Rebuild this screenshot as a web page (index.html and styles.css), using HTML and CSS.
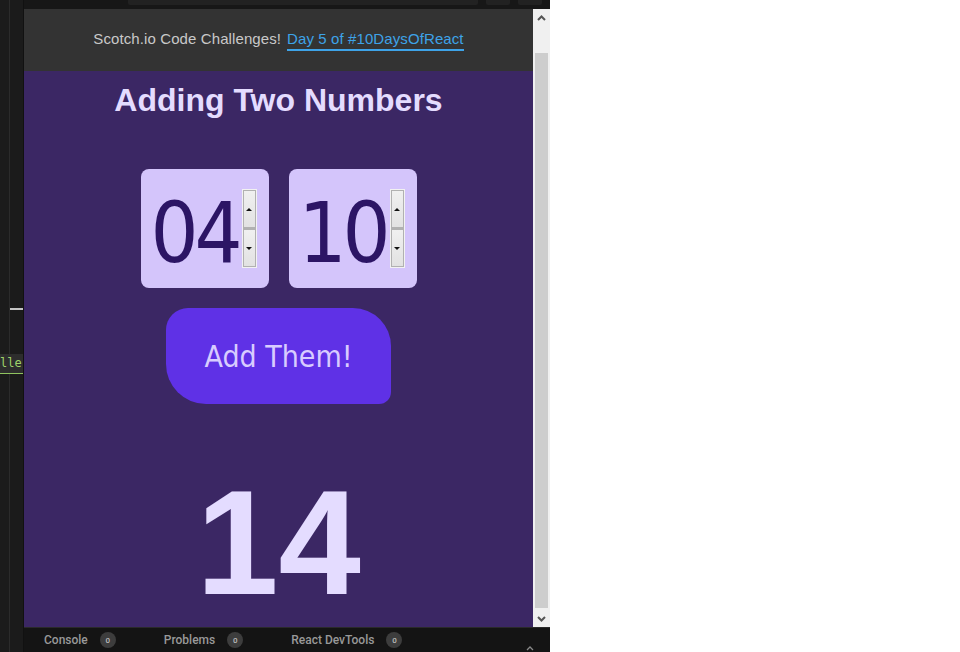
FILE: index.html
```html
<!DOCTYPE html>
<html>
<head>
<meta charset="utf-8">
<link rel="stylesheet" href="styles.css">
</head>
<body>
<div class="app">
  <div class="gutter">
    <div class="gutter-mark"></div>
    <div class="gutter-code">lle</div>
  </div>
  <div class="main">
    <div class="topbar">
      <div class="url-box"></div>
      <div class="top-btn"></div>
      <div class="top-btn"></div>
    </div>
    <div class="viewport">
      <div class="page">
        <div class="banner">
          <span>Scotch.io Code Challenges!</span>
          <a class="banner-link">Day 5 of #10DaysOfReact</a>
        </div>
        <div class="content">
          <h1 class="title">Adding Two Numbers</h1>
          <div class="inputs">
            <div class="num-box">
              <span class="num-value">04</span>
              <div class="spinner">
                <div class="spin-btn"><i class="tri-up"></i></div>
                <div class="spin-btn"><i class="tri-down"></i></div>
              </div>
            </div>
            <div class="num-box">
              <span class="num-value">10</span>
              <div class="spinner">
                <div class="spin-btn"><i class="tri-up"></i></div>
                <div class="spin-btn"><i class="tri-down"></i></div>
              </div>
            </div>
          </div>
          <button class="add-btn">Add Them!</button>
          <div class="result">14</div>
        </div>
      </div>
      <div class="scrollbar">
        <div class="sb-arrow">
          <svg width="9" height="6" viewBox="0 0 9 6"><path d="M1 5 L4.5 1.5 L8 5" fill="none" stroke="#555" stroke-width="2"/></svg>
        </div>
        <div class="sb-track"><div class="sb-thumb"></div></div>
        <div class="sb-arrow">
          <svg width="9" height="6" viewBox="0 0 9 6"><path d="M1 1 L4.5 4.5 L8 1" fill="none" stroke="#555" stroke-width="2"/></svg>
        </div>
      </div>
    </div>
    <div class="bottombar">
      <div class="tab"><span>Console</span><span class="badge">0</span></div>
      <div class="tab"><span>Problems</span><span class="badge">0</span></div>
      <div class="tab"><span>React DevTools</span><span class="badge">0</span></div>
      <div class="bb-chevron">
        <svg width="8" height="5" viewBox="0 0 8 5"><path d="M1 4 L4 1 L7 4" fill="none" stroke="#888" stroke-width="1.3"/></svg>
      </div>
    </div>
  </div>
</div>
</body>
</html>
```
FILE: styles.css
```css
* { box-sizing: border-box; }
html, body { margin: 0; padding: 0; background: #ffffff; }
.app {
  display: flex;
  width: 550px;
  height: 652px;
  font-family: "Liberation Sans", Arial, sans-serif;
}
.gutter {
  width: 24px;
  flex: none;
  display: flex;
  flex-direction: column;
  background: linear-gradient(to right, #1b1b1b 0, #1b1b1b 9px, #2b2b2b 9px, #2b2b2b 10px, #1b1b1b 10px, #1b1b1b 23px, #111 23px);
}
.gutter-mark {
  margin-top: 308px;
  margin-left: 10px;
  width: 13px;
  height: 2px;
  background: #c4c4c4;
}
.gutter-code {
  margin-top: 44px;
  width: 23px;
  height: 20px;
  background: #2d2d2d;
  overflow: hidden;
  white-space: nowrap;
  font-family: "DejaVu Sans Mono", monospace;
  font-size: 12px;
  line-height: 19px;
  color: #9fd36a;
  border-bottom: 1px solid #8fc35f;
}
.main {
  width: 526px;
  flex: none;
  display: flex;
  flex-direction: column;
}
.topbar {
  height: 9px;
  flex: none;
  background: #171717;
  display: flex;
  align-items: flex-start;
  padding-left: 104px;
}
.url-box {
  width: 350px;
  height: 5px;
  background: #222;
  border-radius: 0 0 2px 2px;
}
.top-btn {
  width: 24px;
  height: 5px;
  background: #222;
  margin-left: 8px;
  border-radius: 0 0 2px 2px;
}
.viewport {
  flex: 1;
  display: flex;
  min-height: 0;
}
.page {
  flex: 1;
  display: flex;
  flex-direction: column;
  min-height: 0;
}
.banner {
  height: 62px;
  flex: none;
  background: #333333;
  display: flex;
  justify-content: center;
  align-items: center;
  gap: 6px;
  font-size: 15px;
  letter-spacing: 0.1px;
  color: #c9c9c9;
  padding-bottom: 4px;
}
.banner-link {
  color: #3ea3e8;
  border-bottom: 2px solid #3ea3e8;
  padding-bottom: 2px;
  margin-top: 4px;
}
.content {
  flex: 1;
  min-height: 0;
  background: #3b2764;
  display: flex;
  flex-direction: column;
  align-items: center;
  padding-top: 11px;
}
.title {
  margin: 0;
  font-size: 32px;
  line-height: 37px;
  font-weight: bold;
  color: #e4dcff;
}
.inputs {
  margin-top: 50px;
  display: flex;
  gap: 20px;
}
.num-box {
  width: 128px;
  height: 119px;
  border-radius: 8px;
  background: #d4c5fb;
  display: flex;
  align-items: flex-start;
  padding: 20px 12px 20px 10px;
}
.num-value {
  flex: 1;
  font-family: "DejaVu Sans Condensed", "DejaVu Sans", sans-serif;
  font-size: 84px;
  line-height: 88px;
  letter-spacing: -4px;
  color: #2c1565;
  white-space: nowrap;
}
.spinner {
  width: 15px;
  height: 79px;
  flex: none;
  display: flex;
  flex-direction: column;
  border: 1px solid #f2f2f2;
  background: #f2f2f2;
}
.spin-btn {
  flex: 1;
  border: 1px solid #b1b1b1;
  background: linear-gradient(#f0f0f0, #e2e2e2);
  display: flex;
  align-items: center;
  justify-content: center;
}
.spin-btn + .spin-btn { border-top-width: 2px; }
.tri-up {
  width: 0; height: 0;
  border-left: 3px solid transparent;
  border-right: 3px solid transparent;
  border-bottom: 3px solid #111;
}
.tri-down {
  width: 0; height: 0;
  border-left: 3px solid transparent;
  border-right: 3px solid transparent;
  border-top: 3px solid #111;
}
.add-btn {
  margin-top: 20px;
  width: 225px;
  height: 96px;
  flex: none;
  border: none;
  background: #5f31e6;
  border-radius: 22px 38px 12px 40px;
  color: #d8ccff;
  font-family: "DejaVu Sans Condensed", "DejaVu Sans", sans-serif;
  font-size: 30px;
  padding: 0;
}
.result {
  margin-top: 64px;
  font-size: 148px;
  line-height: 150px;
  font-weight: bold;
  color: #e4dcff;
}
.scrollbar {
  width: 17px;
  flex: none;
  background: #f0f0f0;
  display: flex;
  flex-direction: column;
}
.sb-arrow {
  height: 17px;
  flex: none;
  display: flex;
  align-items: center;
  justify-content: center;
}
.sb-track {
  flex: 1;
  padding: 27px 2px 2px 2px;
  display: flex;
}
.sb-thumb {
  flex: 1;
  background: #cdcdcd;
}
.bottombar {
  height: 25px;
  flex: none;
  background: #141414;
  border-top: 1px solid #2a2a2a;
  display: flex;
  align-items: center;
  gap: 48px;
  padding-left: 20px;
  font-family: Roboto, "Liberation Sans", sans-serif;
  font-weight: 500;
  font-size: 12px;
  color: #999;
  position: relative;
}
.tab {
  display: flex;
  align-items: center;
  gap: 12px;
}
.badge {
  width: 16px;
  height: 16px;
  border-radius: 50%;
  background: #3d3d3d;
  color: #bbb;
  font-size: 8px;
  display: flex;
  align-items: center;
  justify-content: center;
}
.bb-chevron {
  position: absolute;
  right: 16px;
  bottom: 1px;
  line-height: 0;
}
```
